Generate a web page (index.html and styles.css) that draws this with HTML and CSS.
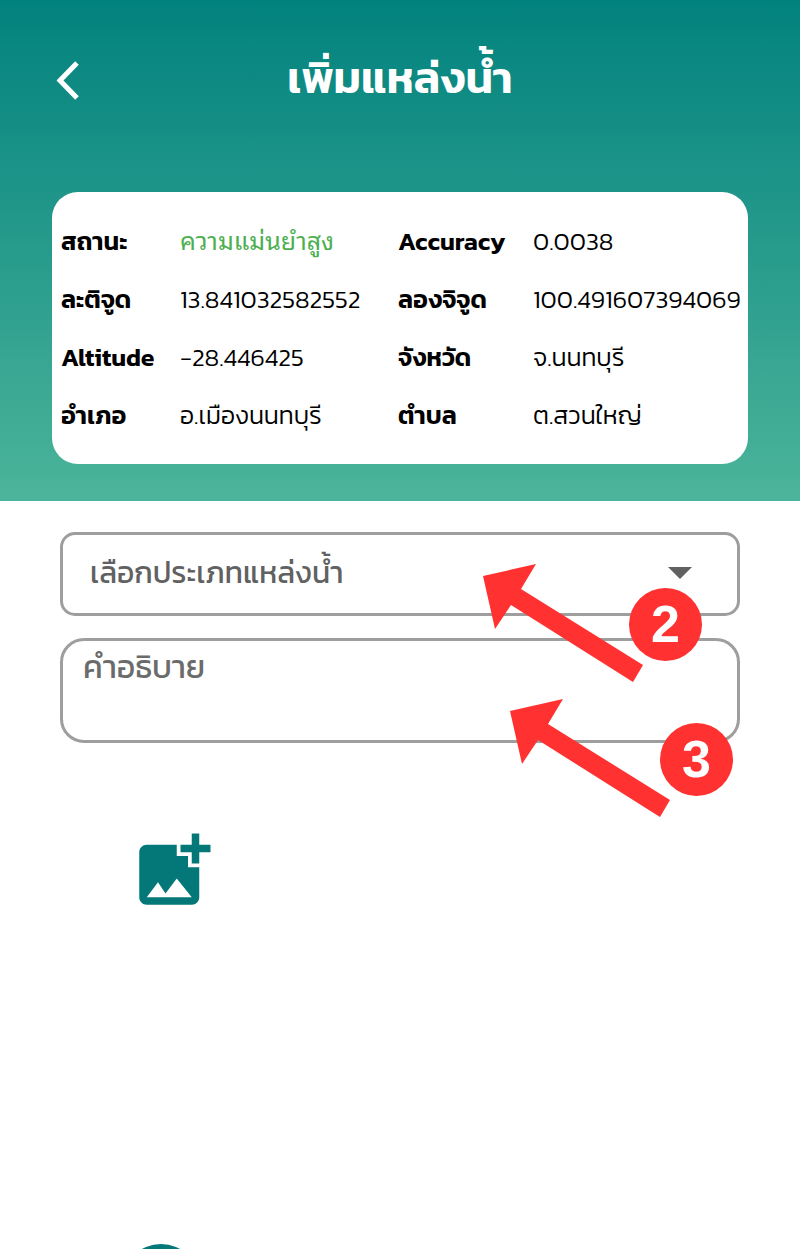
FILE: index.html
```html
<!DOCTYPE html>
<html lang="th">
<head>
<meta charset="utf-8">
<meta name="viewport" content="width=device-width, initial-scale=1">
<title>เพิ่มแหล่งน้ำ</title>
<link rel="stylesheet" href="styles.css">
</head>
<body>
<div class="screen">
  <header class="hero">
    <div class="topbar">
      <button class="back" type="button" aria-label="กลับ">
        <svg viewBox="0 0 24 40" width="24" height="40"><path d="M22 3 5 20.500 22 38" fill="none" stroke="currentColor" stroke-width="5"/></svg>
      </button>
      <h1 class="title">เพิ่มแหล่งน้ำ</h1>
    </div>
    <dl class="card">
      <dt>สถานะ</dt><dd class="good">ความแม่นยำสูง</dd>
      <dt>Accuracy</dt><dd>0.0038</dd>
      <dt>ละติจูด</dt><dd>13.841032582552</dd>
      <dt>ลองจิจูด</dt><dd>100.491607394069</dd>
      <dt>Altitude</dt><dd>-28.446425</dd>
      <dt>จังหวัด</dt><dd>จ.นนทบุรี</dd>
      <dt>อำเภอ</dt><dd>อ.เมืองนนทบุรี</dd>
      <dt>ตำบล</dt><dd>ต.สวนใหญ่</dd>
    </dl>
  </header>
  <main class="form">
    <div class="field">
      <select class="select" aria-label="เลือกประเภทแหล่งน้ำ">
        <option>เลือกประเภทแหล่งน้ำ</option>
      </select>
      <svg class="caret" viewBox="0 0 24 12" width="24" height="12"><path d="M0 0h24L12 12z" fill="currentColor"/></svg>
      <svg class="pointer pointer-two" viewBox="0 0 160 118" width="160" height="118"><path d="M0 12 53 0 38 25l122 76-10 17L28 41 12 65z" fill="currentColor"/></svg>
      <span class="badge badge-two">2</span>
    </div>
    <div class="field">
      <textarea class="textarea" aria-label="คำอธิบาย" placeholder="คำอธิบาย"></textarea>
      <svg class="pointer pointer-three" viewBox="0 0 160 118" width="160" height="118"><path d="M0 12 53 0 38 25l122 76-10 17L28 41 12 65z" fill="currentColor"/></svg>
      <span class="badge badge-three">3</span>
    </div>
    <div class="photos">
      <button class="add-photo" type="button" aria-label="เพิ่มรูปภาพ">
        <svg viewBox="0 0 24 24" width="90" height="90"><path fill="currentColor" d="M19 7v3h-2V7h-3V5h3V2h2v3h3v2zM16 11V8h-3V5H5c-1.100 0-2 .9-2 2v12c0 1.100.9 2 2 2h12c1.100 0 2-.9 2-2v-8zM5 19l3-4 2 3 3-4 4 5z"/></svg>
      </button>
    </div>
    <button class="fab" type="button" aria-label="บันทึก"></button>
  </main>
</div>
</body>
</html>
```
FILE: styles.css
```css
* { box-sizing: border-box; }

body {
  margin: 0;
  background: #fff;
  color: #000;
  font-family: Kanit, "Noto Sans Thai", "Noto Sans", sans-serif;
}

button {
  padding: 0;
  border: 0;
  background: none;
  color: inherit;
}

svg { display: block; }

.screen {
  height: 100vh;
  overflow: hidden;
}

.hero {
  padding: 40px 52px 37px;
  background: linear-gradient(#02827e, #4cb49a);
}

.topbar {
  display: grid;
  grid-template-columns: 32px 1fr 32px;
  align-items: center;
  height: 80px;
  margin-bottom: 72px;
  color: #fff;
}

.back { padding-left: 3px; }

.title {
  margin: 0;
  text-align: center;
  font-size: 44px;
  font-weight: 600;
  line-height: 76px;
  white-space: nowrap;
  align-self: start;
}

.card {
  display: grid;
  grid-template-columns: 119fr 218fr 135fr 215fr;
  grid-auto-rows: 58px;
  align-items: center;
  margin: 0;
  padding: 20px 0 20px 9px;
  border-radius: 26px;
  background: #fff;
  font-size: 25px;
  font-weight: 300;
  line-height: 40px;
  white-space: nowrap;
}

.card dt { font-weight: 600; }
.card dd { margin: 0; }

.card .good {
  padding-bottom: 4px;
  color: #4caf50;
  font-family: "Noto Sans Thai Looped", "Noto Sans Thai", Sarabun, Loma, Garuda, "Noto Sans", sans-serif;
  font-weight: 400;
}

.form {
  display: flex;
  flex-direction: column;
  gap: 22px;
  padding: 31px 60px 0;
}

.field {
  position: relative;
  color: #616161;
}

.select,
.textarea {
  display: block;
  width: 100%;
  border: 3px solid #9e9e9e;
  background: #fff;
  color: #616161;
  font-family: inherit;
  font-size: 30px;
}

.select {
  appearance: none;
  height: 84px;
  padding: 0 80px 4px 27px;
  border-radius: 15px;
}

.textarea {
  height: 105px;
  padding: 4px 20px;
  border-radius: 24px;
  font-size: 32px;
  line-height: 44px;
  resize: none;
}

.textarea::placeholder {
  color: #6b6b6b;
  opacity: 1;
}

.caret {
  position: absolute;
  top: 35px;
  right: 48px;
  pointer-events: none;
}

.pointer {
  position: absolute;
  z-index: 1;
  color: #ff3131;
  pointer-events: none;
}

.pointer-two { top: 32px; right: 97px; }
.pointer-three { top: 61px; right: 70px; }

.badge {
  position: absolute;
  z-index: 1;
  width: 73px;
  height: 73px;
  border-radius: 50%;
  background: #ff3131;
  color: #fff;
  font-family: "Liberation Sans", sans-serif;
  font-size: 52px;
  font-weight: 700;
  line-height: 73px;
  text-align: center;
}

.badge-two { top: 56px; right: 38px; }
.badge-three { top: 85px; right: 7px; }

.photos {
  height: 457px;
  padding: 61px 68px 0;
}

.add-photo,
.fab { color: #047878; }

.fab {
  flex: none;
  width: 78px;
  height: 78px;
  margin-left: 62px;
  border-radius: 50%;
  background: currentColor;
}
```
